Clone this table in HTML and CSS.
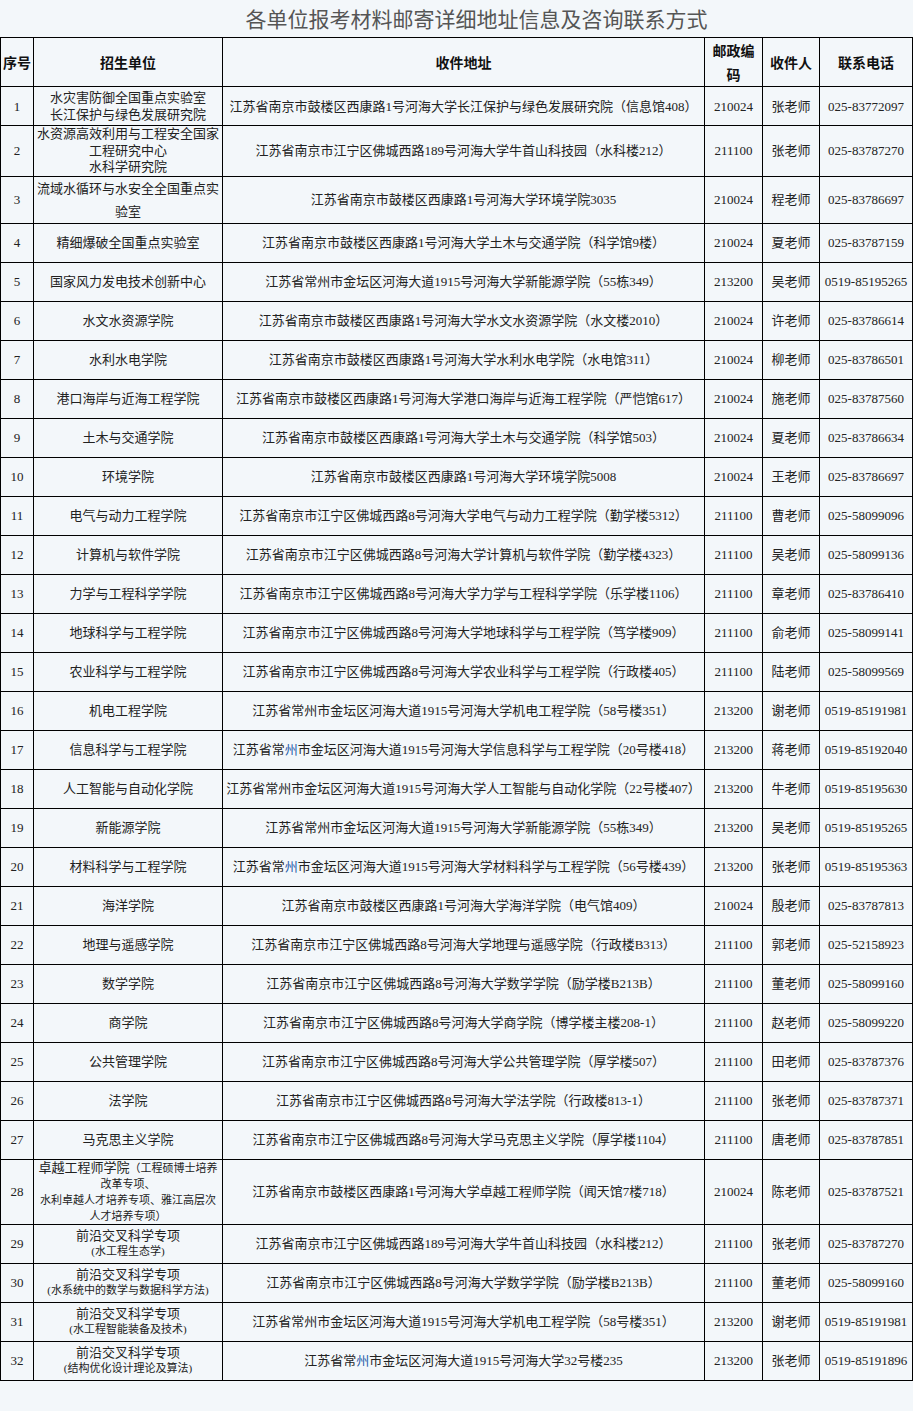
FILE: index.html
```html
<!DOCTYPE html>
<html lang="zh-CN">
<head>
<meta charset="utf-8">
<title>各单位报考材料邮寄详细地址信息及咨询联系方式</title>
<link rel="stylesheet" href="styles.css">
</head>
<body>
<div class="page">
<h1 class="title">各单位报考材料邮寄详细地址信息及咨询联系方式</h1>
<table class="info">
<colgroup>
<col class="c-no"><col class="c-unit"><col class="c-addr"><col class="c-zip"><col class="c-man"><col class="c-tel">
</colgroup>
<thead>
<tr class="head"><th>序号</th><th>招生单位</th><th>收件地址</th><th>邮政编码</th><th>收件人</th><th>联系电话</th></tr>
</thead>
<tbody>
<tr class="lh17"><td>1</td><td>水灾害防御全国重点实验室<br>长江保护与绿色发展研究院</td><td>江苏省南京市鼓楼区西康路1号河海大学长江保护与绿色发展研究院（信息馆408）</td><td>210024</td><td>张老师</td><td>025-83772097</td></tr>
<tr class="lh16"><td>2</td><td>水资源高效利用与工程安全国家工程研究中心<br>水科学研究院</td><td>江苏省南京市江宁区佛城西路189号河海大学牛首山科技园（水科楼212）</td><td>211100</td><td>张老师</td><td>025-83787270</td></tr>
<tr class="lh23"><td>3</td><td>流域水循环与水安全全国重点实验室</td><td>江苏省南京市鼓楼区西康路1号河海大学环境学院3035</td><td>210024</td><td>程老师</td><td>025-83786697</td></tr>
<tr><td>4</td><td>精细爆破全国重点实验室</td><td>江苏省南京市鼓楼区西康路1号河海大学土木与交通学院（科学馆9楼）</td><td>210024</td><td>夏老师</td><td>025-83787159</td></tr>
<tr><td>5</td><td>国家风力发电技术创新中心</td><td>江苏省常州市金坛区河海大道1915号河海大学新能源学院（55栋349）</td><td>213200</td><td>吴老师</td><td>0519-85195265</td></tr>
<tr><td>6</td><td>水文水资源学院</td><td>江苏省南京市鼓楼区西康路1号河海大学水文水资源学院（水文楼2010）</td><td>210024</td><td>许老师</td><td>025-83786614</td></tr>
<tr><td>7</td><td>水利水电学院</td><td>江苏省南京市鼓楼区西康路1号河海大学水利水电学院（水电馆311）</td><td>210024</td><td>柳老师</td><td>025-83786501</td></tr>
<tr><td>8</td><td>港口海岸与近海工程学院</td><td>江苏省南京市鼓楼区西康路1号河海大学港口海岸与近海工程学院（严恺馆617）</td><td>210024</td><td>施老师</td><td>025-83787560</td></tr>
<tr><td>9</td><td>土木与交通学院</td><td>江苏省南京市鼓楼区西康路1号河海大学土木与交通学院（科学馆503）</td><td>210024</td><td>夏老师</td><td>025-83786634</td></tr>
<tr><td>10</td><td>环境学院</td><td>江苏省南京市鼓楼区西康路1号河海大学环境学院5008</td><td>210024</td><td>王老师</td><td>025-83786697</td></tr>
<tr><td>11</td><td>电气与动力工程学院</td><td>江苏省南京市江宁区佛城西路8号河海大学电气与动力工程学院（勤学楼5312）</td><td>211100</td><td>曹老师</td><td>025-58099096</td></tr>
<tr><td>12</td><td>计算机与软件学院</td><td>江苏省南京市江宁区佛城西路8号河海大学计算机与软件学院（勤学楼4323）</td><td>211100</td><td>吴老师</td><td>025-58099136</td></tr>
<tr><td>13</td><td>力学与工程科学学院</td><td>江苏省南京市江宁区佛城西路8号河海大学力学与工程科学学院（乐学楼1106）</td><td>211100</td><td>章老师</td><td>025-83786410</td></tr>
<tr><td>14</td><td>地球科学与工程学院</td><td>江苏省南京市江宁区佛城西路8号河海大学地球科学与工程学院（笃学楼909）</td><td>211100</td><td>俞老师</td><td>025-58099141</td></tr>
<tr><td>15</td><td>农业科学与工程学院</td><td>江苏省南京市江宁区佛城西路8号河海大学农业科学与工程学院（行政楼405）</td><td>211100</td><td>陆老师</td><td>025-58099569</td></tr>
<tr><td>16</td><td>机电工程学院</td><td>江苏省常州市金坛区河海大道1915号河海大学机电工程学院（58号楼351）</td><td>213200</td><td>谢老师</td><td>0519-85191981</td></tr>
<tr><td>17</td><td>信息科学与工程学院</td><td>江苏省常<span class="hl">州</span>市金坛区河海大道1915号河海大学信息科学与工程学院（20号楼418）</td><td>213200</td><td>蒋老师</td><td>0519-85192040</td></tr>
<tr><td>18</td><td>人工智能与自动化学院</td><td>江苏省常州市金坛区河海大道1915号河海大学人工智能与自动化学院（22号楼407）</td><td>213200</td><td>牛老师</td><td>0519-85195630</td></tr>
<tr><td>19</td><td>新能源学院</td><td>江苏省常州市金坛区河海大道1915号河海大学新能源学院（55栋349）</td><td>213200</td><td>吴老师</td><td>0519-85195265</td></tr>
<tr><td>20</td><td>材料科学与工程学院</td><td>江苏省常<span class="hl">州</span>市金坛区河海大道1915号河海大学材料科学与工程学院（56号楼439）</td><td>213200</td><td>张老师</td><td>0519-85195363</td></tr>
<tr><td>21</td><td>海洋学院</td><td>江苏省南京市鼓楼区西康路1号河海大学海洋学院（电气馆409）</td><td>210024</td><td>殷老师</td><td>025-83787813</td></tr>
<tr><td>22</td><td>地理与遥感学院</td><td>江苏省南京市江宁区佛城西路8号河海大学地理与遥感学院（行政楼B313）</td><td>211100</td><td>郭老师</td><td>025-52158923</td></tr>
<tr><td>23</td><td>数学学院</td><td>江苏省南京市江宁区佛城西路8号河海大学数学学院（励学楼B213B）</td><td>211100</td><td>董老师</td><td>025-58099160</td></tr>
<tr><td>24</td><td>商学院</td><td>江苏省南京市江宁区佛城西路8号河海大学商学院（博学楼主楼208-1）</td><td>211100</td><td>赵老师</td><td>025-58099220</td></tr>
<tr><td>25</td><td>公共管理学院</td><td>江苏省南京市江宁区佛城西路8号河海大学公共管理学院（厚学楼507）</td><td>211100</td><td>田老师</td><td>025-83787376</td></tr>
<tr><td>26</td><td>法学院</td><td>江苏省南京市江宁区佛城西路8号河海大学法学院（行政楼813-1）</td><td>211100</td><td>张老师</td><td>025-83787371</td></tr>
<tr><td>27</td><td>马克思主义学院</td><td>江苏省南京市江宁区佛城西路8号河海大学马克思主义学院（厚学楼1104）</td><td>211100</td><td>唐老师</td><td>025-83787851</td></tr>
<tr class="r28"><td>28</td><td>卓越工程师学院<span class="sub">（工程硕博士培养改革专项、<br>水利卓越人才培养专项、雅江高层次人才培养专项）</span></td><td>江苏省南京市鼓楼区西康路1号河海大学卓越工程师学院（闻天馆7楼718）</td><td>210024</td><td>陈老师</td><td>025-83787521</td></tr>
<tr class="lh15"><td>29</td><td>前沿交叉科学专项<br><span class="sub">(水工程生态学)</span></td><td>江苏省南京市江宁区佛城西路189号河海大学牛首山科技园（水科楼212）</td><td>211100</td><td>张老师</td><td>025-83787270</td></tr>
<tr class="lh15"><td>30</td><td>前沿交叉科学专项<br><span class="sub">(水系统中的数学与数据科学方法)</span></td><td>江苏省南京市江宁区佛城西路8号河海大学数学学院（励学楼B213B）</td><td>211100</td><td>董老师</td><td>025-58099160</td></tr>
<tr class="lh15"><td>31</td><td>前沿交叉科学专项<br><span class="sub">(水工程智能装备及技术)</span></td><td>江苏省常州市金坛区河海大道1915号河海大学机电工程学院（58号楼351）</td><td>213200</td><td>谢老师</td><td>0519-85191981</td></tr>
<tr class="lh15"><td>32</td><td>前沿交叉科学专项<br><span class="sub">(结构优化设计理论及算法)</span></td><td>江苏省常<span class="hl">州</span>市金坛区河海大道1915号河海大学32号楼235</td><td>213200</td><td>张老师</td><td>0519-85191896</td></tr>
</tbody>
</table>
</div>
</body>
</html>
```

FILE: styles.css
```css
html, body {
  margin: 0;
  padding: 0;
  background: #f3f7fa;
}
body {
  font-family: "Liberation Serif", "Noto Sans CJK SC", serif;
  color: #222;
}
.page {
  width: 913px;
}
.title {
  margin: 0;
  height: 37px;
  line-height: 37px;
  padding-left: 40px;
  text-align: center;
  font-family: "Noto Sans CJK SC", sans-serif;
  font-size: 21px;
  font-weight: normal;
  color: #555;
  white-space: nowrap;
}
.info {
  width: 912px;
  border-collapse: collapse;
  table-layout: fixed;
  font-size: 13px;
}
.c-no { width: 33px; }
.c-unit { width: 189px; }
.c-addr { width: 482px; }
.c-zip { width: 58px; }
.c-man { width: 57px; }
.c-tel { width: 93px; }
.info th,
.info td {
  border: 1px solid #000;
  padding: 0 2px;
  text-align: center;
  vertical-align: middle;
  white-space: normal;
}
.info th {
  height: 48px;
  font-family: "Noto Sans CJK SC", sans-serif;
  font-size: 14px;
  font-weight: bold;
  line-height: 24px;
  color: #111;
}
.info td {
  height: 38px;
  line-height: 23px;
}
.info td:nth-child(3) {
  white-space: nowrap;
  padding: 0 1px;
}
.lh17 td { line-height: 17px; }
.lh16 td { line-height: 16.5px; }
.lh23 td { line-height: 23px; }
.lh15 td { line-height: 15px; }
.r28 td { height: 64px; line-height: 16px; }
.sub {
  font-size: 11px;
  line-height: 15px;
}
.hl {
  color: #1e5aa8;
}
```
